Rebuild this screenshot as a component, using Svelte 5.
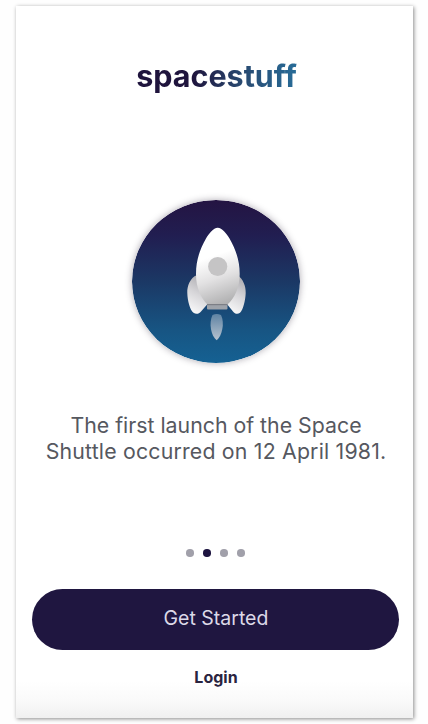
<script>
  const slides = [0, 1, 2, 3];
  let current = $state(1);
</script>

<main class="screen">
  <h1><span class="brand">spacestuff</span></h1>

  <svg class="badge" width="168" height="163" viewBox="0 0 168 163" role="img" aria-label="Rocket">
    <defs>
      <linearGradient id="sky" x1="0" y1="0" x2="0" y2="1">
        <stop offset="0" stop-color="#241442" />
        <stop offset="0.22" stop-color="#211e51" />
        <stop offset="0.5" stop-color="#1b3865" />
        <stop offset="0.8" stop-color="#175583" />
        <stop offset="1" stop-color="#156193" />
      </linearGradient>
      <linearGradient id="hull" x1="0.4" y1="0" x2="0.6" y2="1">
        <stop offset="0.35" stop-color="#ffffff" />
        <stop offset="0.65" stop-color="#e2e1e2" />
        <stop offset="1" stop-color="#b0b0b1" />
      </linearGradient>
      <linearGradient id="fin" x1="0.7" y1="0" x2="0.4" y2="1">
        <stop offset="0" stop-color="#aaa9ae" />
        <stop offset="0.5" stop-color="#d6d5d8" />
        <stop offset="1" stop-color="#f8f8f9" />
      </linearGradient>
      <linearGradient id="flame" x1="0" y1="0" x2="0" y2="1">
        <stop offset="0" stop-color="#5f83a3" />
        <stop offset="1" stop-color="#b7c3d0" />
      </linearGradient>
    </defs>
    <ellipse cx="84" cy="81.5" rx="84" ry="81.5" fill="url(#sky)" />
    <path d="M65 75C58 78 55 86 55.300 93C55.500 101 58 110 61.500 112.800C64 114.500 67 114 69 111.500L76 103.500Z" fill="url(#fin)" />
    <path d="M105.500 75C111 79 114 86 113.700 93C113.400 101 111 110 108 112.800C105.500 114.500 103 114 101 111.500L94.500 103.500Z" fill="url(#fin)" />
    <path d="M85.700 27.700C81.500 27.700 76.500 34 74 38.500C68 49 64 60 64 74C64 88 69 98 75.500 104.500H95.500C102.500 98 107.700 88 107.700 74C107.700 60 103.500 49 97.500 38.500C95 34 90 27.700 85.700 27.700Z" fill="url(#hull)" />
    <rect x="75" y="104.500" width="20.500" height="5" rx="1" fill="#9ea3aa" />
    <path d="M75 104.700H95.500" stroke="#7c7c80" stroke-width="1" />
    <circle cx="85.700" cy="66.500" r="9.600" fill="#c5c4c5" />
    <path d="M80.500 115Q84.700 113 89 115C93 123 90 136 84.700 140.300C79 136 76.500 123 80.500 115Z" fill="url(#flame)" />
  </svg>

  <p>
    <span class="first">The first launch of the Space</span>
    <span class="second">Shuttle occurred on 12 April 1981.</span>
  </p>

  <nav class="dots" aria-label="Slides">
    {#each slides as slide}
      <button class="dot" class:active={slide === current} aria-label="Slide" onclick={() => (current = slide)}></button>
    {/each}
  </nav>

  <button class="start">Get Started</button>
  <button class="login">Login</button>
</main>

<style>
  :global(body) {
    background: #fefefe;
  }
  .screen {
    box-sizing: border-box;
    width: 397px;
    height: 712px;
    margin: 6px 0 6px 16px;
    display: flex;
    flex-direction: column;
    align-items: center;
    background: linear-gradient(#fff 0, #fff 675px, #fafafa 694px, #f0f0f0 712px);
    box-shadow: 1px 1px 4px rgba(0, 0, 0, 0.45);
    font-family: Inter, "Liberation Sans", sans-serif;
  }
  h1 {
    margin: 50px 0 0 4px;
    height: 40px;
    font-size: 30.5px;
    line-height: 40px;
    font-weight: 700;
  }
  .brand {
    display: block;
    background: linear-gradient(90deg, #1f143d 35%, #28486f 65%, #286c98);
    -webkit-background-clip: text;
    background-clip: text;
    color: transparent;
  }
  .badge {
    display: block;
    flex: none;
    margin: 104px 0 0 3px;
    border-radius: 50%;
    box-shadow: 0 0 7px rgba(40, 30, 50, 0.38);
  }
  p {
    margin: 49px 0 0 3px;
    font-size: 21.3px;
    line-height: 26px;
    color: #56585f;
    text-align: center;
    white-space: nowrap;
  }
  p span {
    display: block;
  }
  .second {
    letter-spacing: 0.19px;
  }
  button {
    border: 0;
    padding: 0;
    font-family: inherit;
  }
  .dots {
    display: flex;
    gap: 9.5px;
    margin: 85px 0 0 2px;
  }
  .dot {
    width: 7.5px;
    height: 7.5px;
    border-radius: 50%;
    background: #a1a0aa;
  }
  .dot.active {
    background: #1d1440;
  }
  .start {
    width: 367px;
    height: 61px;
    margin: 32.5px 0 0 2px;
    flex: none;
    border-radius: 31px;
    background: #1f1640;
    color: #dcd9e8;
    font-size: 19.5px;
    line-height: 58px;
    padding: 0 0 3px 1px;
  }
  .login {
    margin: 15px 0 0 3px;
    height: 24px;
    background: none;
    color: #2a2440;
    font-size: 16px;
    line-height: 24px;
    font-weight: 700;
  }
</style>
